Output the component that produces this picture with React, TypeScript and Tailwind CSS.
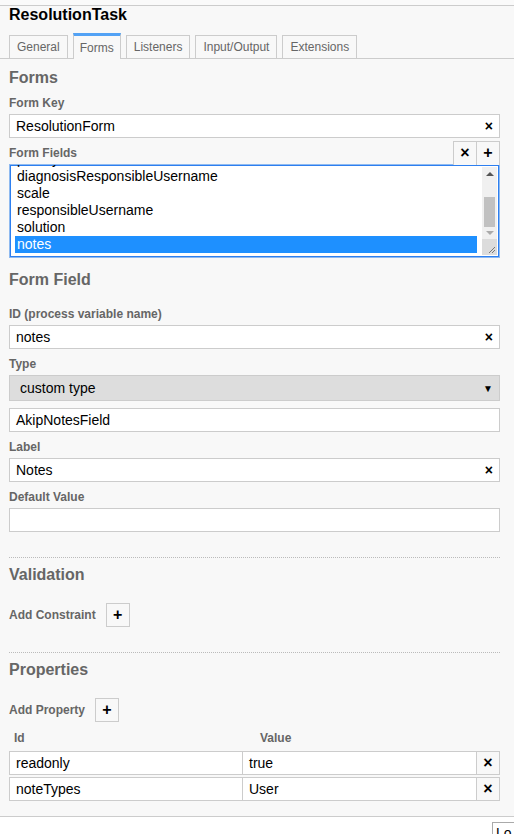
import React from 'react';

const font = { fontFamily: '"Liberation Sans", Arial, sans-serif' };

function Label({ children, className = '' }: { children: React.ReactNode; className?: string }) {
  return <div className={`text-[12px] leading-[14px] font-bold text-[#666] ${className}`}>{children}</div>;
}

function Heading({ children, className = '' }: { children: React.ReactNode; className?: string }) {
  return <div className={`text-[16px] leading-[18px] font-bold text-[#666] ${className}`}>{children}</div>;
}

function TextInput({ value, clear, className = '' }: { value: string; clear?: boolean; className?: string }) {
  return (
    <div className={`h-[24px] bg-white border border-[#ccc] flex items-center pl-[6px] pr-[6px] text-[14px] text-black ${className}`}>
      <span className="flex-1">{value}</span>
      {clear && <span className="text-[14px] font-bold leading-none">×</span>}
    </div>
  );
}

function SmallBtn({ children, className = '' }: { children: React.ReactNode; className?: string }) {
  return (
    <div className={`w-[24px] h-[24px] border border-[#ccc] bg-[#f8f8f8] flex items-center justify-center text-[16px] font-bold text-black leading-none ${className}`}>
      {children}
    </div>
  );
}

const tabs = ['General', 'Forms', 'Listeners', 'Input/Output', 'Extensions'];
const fields = ['priority', 'diagnosisResponsibleUsername', 'scale', 'responsibleUsername', 'solution', 'notes'];

export default function App() {
  return (
    <div className="w-[514px] h-[834px] bg-white overflow-hidden" style={font}>
      <div className="h-[5px] bg-[#fafafa]" />
      <div className="bg-[#f8f8f8] border-t border-[#ccc] border-b border-b-[#ccc] h-[812px]">
        {/* title */}
        <div className="pl-[9px] text-[16px] leading-[17px] font-bold text-black">ResolutionTask</div>

        {/* tabs */}
        <div className="mt-[11px] flex items-end gap-[5px] pl-[9px] border-b border-[#ccc] h-[25px]">
          {tabs.map(t =>
            t === 'Forms' ? (
              <div key={t} className="h-[26px] -mb-px px-[6px] border border-[#ccc] border-t-[3px] border-t-[#52a2f5] border-b-0 bg-[#f8f8f8] text-[12px] text-[#666] flex items-center">
                {t}
              </div>
            ) : (
              <div key={t} className="h-[23px] px-[7px] border border-[#ccc] border-b-0 bg-[#f8f8f8] text-[12px] text-[#666] flex items-center">
                {t}
              </div>
            )
          )}
        </div>

        <div className="pl-[9px] pr-[14px]">
          <Heading className="mt-[10px]">Forms</Heading>
          <Label className="mt-[9px]">Form Key</Label>
          <TextInput className="mt-[4px]" value="ResolutionForm" clear />

          <div className="mt-[3px] flex items-center justify-between h-[23px]">
            <Label>Form Fields</Label>
            <div className="flex">
              <SmallBtn className="w-[23px] border-b-0">×</SmallBtn>
              <SmallBtn className="w-[24px] -ml-px border-b-0">+</SmallBtn>
            </div>
          </div>

          {/* list box */}
          <div className="h-[94px] bg-white border border-[#8fbaf0] shadow-[inset_0_0_0_1px_#2d7ff0] flex overflow-hidden">
            <div className="flex-1 overflow-hidden pl-[5px] pr-[5px] pt-[2px]">
              <div className="-mt-[16px]">
                {fields.map(f => (
                  <div
                    key={f}
                    className={`h-[17px] leading-[17px] text-[14px] pl-[2px] ${f === 'notes' ? 'bg-[#1e90ff] text-white' : 'text-black'}`}
                  >
                    {f}
                  </div>
                ))}
              </div>
            </div>
            {/* scrollbar */}
            <div className="w-[15px] mr-[2px] my-[2px] bg-[#f0f0f0] flex flex-col items-center">
              <div className="h-[14px] flex items-center justify-center">
                <div className="w-0 h-0 border-l-[4px] border-r-[4px] border-b-[4px] border-l-transparent border-r-transparent border-b-[#555]" />
              </div>
              <div className="h-[16px]" />
              <div className="w-[11px] h-[30px] bg-[#c1c1c1]" />
              <div className="h-[12px] flex items-center justify-center">
                <div className="w-0 h-0 border-l-[4px] border-r-[4px] border-t-[4px] border-l-transparent border-r-transparent border-t-[#aaa]" />
              </div>
              <div className="flex-1 w-full bg-[#dcdcdc] relative">
                <svg className="absolute right-[1px] bottom-[1px]" width="8" height="8" viewBox="0 0 8 8">
                  <path d="M7 1L1 7M7 4L4 7" stroke="#777" strokeWidth="1" />
                </svg>
              </div>
            </div>
          </div>

          <Heading className="mt-[13px]">Form Field</Heading>
          <Label className="mt-[18px]">ID (process variable name)</Label>
          <TextInput className="mt-[4px]" value="notes" clear />

          <Label className="mt-[8px]">Type</Label>
          <div className="mt-[4px] h-[26px] bg-[#ddd] border border-[#ccc] flex items-center pl-[10px] pr-[6px] text-[14px] text-black">
            <span className="flex-1">custom type</span>
            <span className="text-[10px]">▼</span>
          </div>
          <TextInput className="mt-[7px]" value="AkipNotesField" />

          <Label className="mt-[8px]">Label</Label>
          <TextInput className="mt-[4px]" value="Notes" clear />

          <Label className="mt-[8px]">Default Value</Label>
          <TextInput className="mt-[4px]" value="" />

          <div className="mt-[25px] border-t border-dotted border-[#bbb]" />
          <Heading className="mt-[8px]">Validation</Heading>
          <div className="mt-[19px] flex items-center gap-[10px]">
            <Label>Add Constraint</Label>
            <SmallBtn>+</SmallBtn>
          </div>

          <div className="mt-[25px] border-t border-dotted border-[#bbb]" />
          <Heading className="mt-[8px]">Properties</Heading>
          <div className="mt-[19px] flex items-center gap-[10px]">
            <Label>Add Property</Label>
            <SmallBtn>+</SmallBtn>
          </div>

          <div className="mt-[9px] flex">
            <Label className="w-[233px] pl-[5px]">Id</Label>
            <Label className="pl-[18px]">Value</Label>
          </div>

          <div className="mt-[6px] flex flex-col gap-[2px]">
            {[
              ['readonly', 'true'],
              ['noteTypes', 'User'],
            ].map(([k, v]) => (
              <div key={k} className="flex">
                <TextInput className="w-[234px]" value={k} />
                <TextInput className="w-[235px] -ml-px" value={v} />
                <SmallBtn className="-ml-px">×</SmallBtn>
              </div>
            ))}
          </div>
        </div>
      </div>
      <div className="flex justify-end">
        <div className="mt-[5px] w-[22px] h-[20px] border border-[#aaa] border-r-0 bg-white text-[14px] pl-[3px] leading-[20px] text-black overflow-hidden">Lo</div>
      </div>
    </div>
  );
}
